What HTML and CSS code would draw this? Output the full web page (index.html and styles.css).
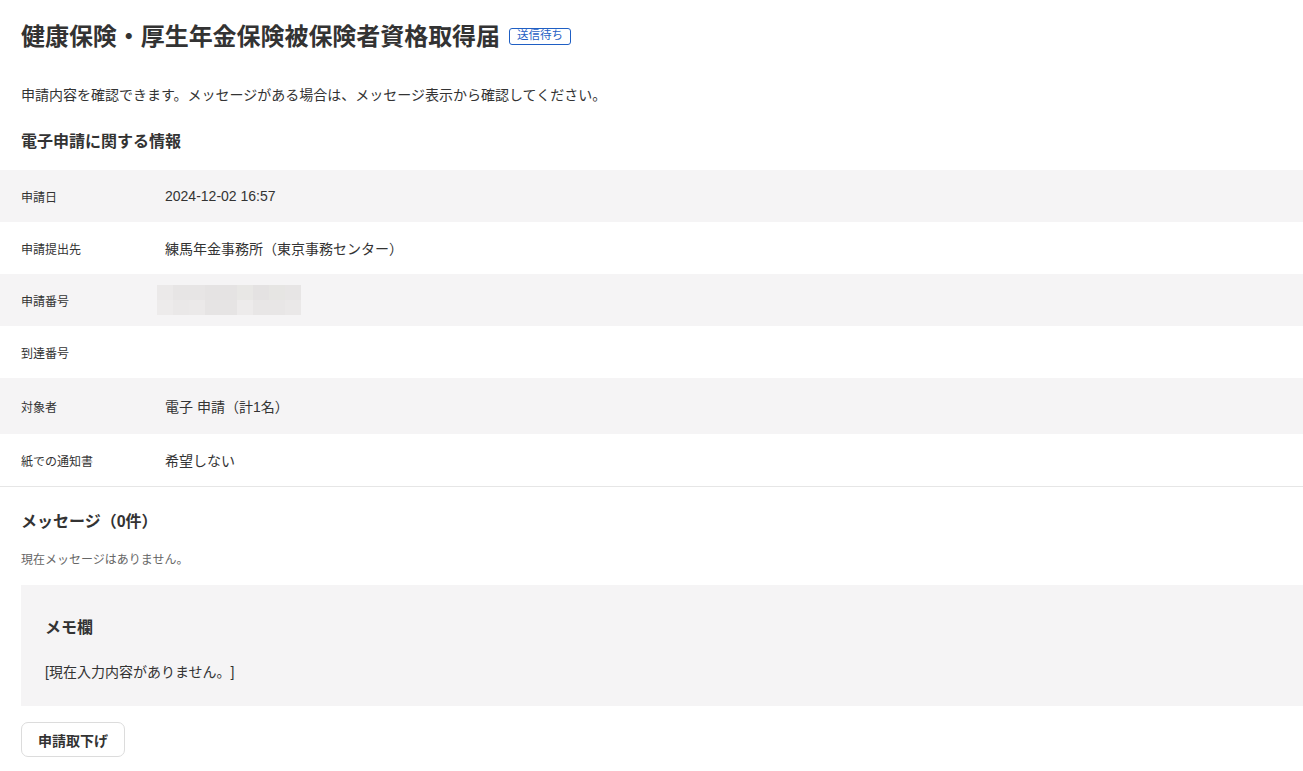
FILE: index.html
```html
<!DOCTYPE html>
<html lang="ja">
<head>
<meta charset="utf-8">
<title>健康保険・厚生年金保険被保険者資格取得届</title>
<link rel="stylesheet" href="styles.css">
</head>
<body>
<main class="page">
  <header class="page-head">
    <h1 class="page-title">健康保険・厚生年金保険被保険者資格取得届</h1>
    <span class="status-badge">送信待ち</span>
  </header>

  <p class="lead">申請内容を確認できます。メッセージがある場合は、メッセージ表示から確認してください。</p>

  <h2 class="section-title">電子申請に関する情報</h2>

  <dl class="info-table">
    <div class="info-row">
      <dt>申請日</dt>
      <dd class="num">2024-12-02 16:57</dd>
    </div>
    <div class="info-row">
      <dt>申請提出先</dt>
      <dd>練馬年金事務所（東京事務センター）</dd>
    </div>
    <div class="info-row">
      <dt>申請番号</dt>
      <dd>
        <div class="masked">
          <span style="background:#ebe9e9"></span><span style="background:#e7e5e5"></span><span style="background:#e7e5e5"></span><span style="background:#e5e3e3"></span><span style="background:#e5e3e3"></span><span style="background:#e8e7e5"></span><span style="background:#e4e2e2"></span><span style="background:#e6e5e3"></span><span style="background:#e7e5e5"></span>
          <span style="background:#edebeb"></span><span style="background:#eae8e8"></span><span style="background:#ebe9e9"></span><span style="background:#e6e4e4"></span><span style="background:#e6e4e4"></span><span style="background:#edebeb"></span><span style="background:#e8e6e6"></span><span style="background:#e8e6e6"></span><span style="background:#eae8e8"></span>
        </div>
      </dd>
    </div>
    <div class="info-row">
      <dt>到達番号</dt>
      <dd></dd>
    </div>
    <div class="info-row tall">
      <dt>対象者</dt>
      <dd>電子 申請（計1名）</dd>
    </div>
    <div class="info-row">
      <dt>紙での通知書</dt>
      <dd>希望しない</dd>
    </div>
  </dl>

  <section class="messages">
    <h2 class="section-title">メッセージ（0件）</h2>
    <p class="empty-note">現在メッセージはありません。</p>

    <div class="memo">
      <h3 class="memo-title">メモ欄</h3>
      <p class="memo-body">[現在入力内容がありません。]</p>
    </div>

    <button class="btn" type="button">申請取下げ</button>
  </section>
</main>
</body>
</html>
```

FILE: styles.css
```css
* {
  box-sizing: border-box;
}

html, body {
  margin: 0;
  padding: 0;
  background: #fff;
}

body {
  font-family: "Liberation Sans", "Noto Sans CJK JP", sans-serif;
  color: #333;
  text-spacing-trim: space-all;
}

.page {
  padding-top: 14px;
}

/* title row */
.page-head {
  display: flex;
  align-items: center;
  gap: 9px;
  padding-left: 21px;
  height: 40px;
}

.page-title {
  margin: 0;
  font-size: 24px;
  font-weight: 700;
  color: #333;
  letter-spacing: -0.05px;
}

.status-badge {
  display: inline-flex;
  align-items: center;
  height: 17px;
  padding: 0 7px;
  margin-top: 4px;
  border: 1px solid #1f5fc4;
  border-radius: 3px;
  color: #1f5fc4;
  font-size: 11.5px;
  line-height: 1;
}

.lead {
  margin: 31px 0 0;
  padding-left: 21px;
  font-size: 14px;
  line-height: 20px;
  color: #333;
}

.section-title {
  margin: 0;
  padding-left: 21px;
  font-size: 16px;
  font-weight: 700;
  line-height: 22px;
  color: #333;
}

.page > .section-title {
  margin-top: 26px;
}

/* application info table */
.info-table {
  margin: 17px 0 0;
  border-bottom: 1px solid #e6e6e6;
}

.info-row {
  display: flex;
  align-items: center;
  height: 52px;
  padding-left: 21px;
}

.info-row.tall {
  height: 56px;
}

.info-row:nth-child(odd) {
  background: #f5f4f5;
}

.info-row dt {
  width: 144px;
  flex: none;
  font-size: 12px;
  color: #333;
}

.info-row dd {
  margin: 0;
  font-size: 14px;
  color: #333;
}

/* obscured application number */
.masked {
  display: grid;
  grid-template-columns: repeat(9, 16px);
  grid-template-rows: 15px 15px;
  margin-left: -8px;
}

/* messages area */
.messages {
  padding-top: 24px;
}

.empty-note {
  margin: 19px 0 0;
  padding-left: 21px;
  font-size: 12px;
  line-height: 16px;
  color: #666;
}

.memo {
  margin: 17px 0 0 21px;
  padding: 32px 24px 25px;
  background: #f5f4f5;
  height: 121px;
}

.memo-title {
  margin: 0;
  font-size: 16px;
  font-weight: 700;
  line-height: 22px;
  color: #333;
}

.memo-body {
  margin: 23px 0 0;
  font-size: 14px;
  line-height: 20px;
  color: #333;
}

.btn {
  display: block;
  margin: 16px 0 0 21px;
  width: 104px;
  height: 35px;
  background: #fff;
  border: 1px solid #dcdcdc;
  border-radius: 7px;
  font-family: inherit;
  font-size: 14px;
  font-weight: 700;
  color: #333;
  cursor: pointer;
}
```
